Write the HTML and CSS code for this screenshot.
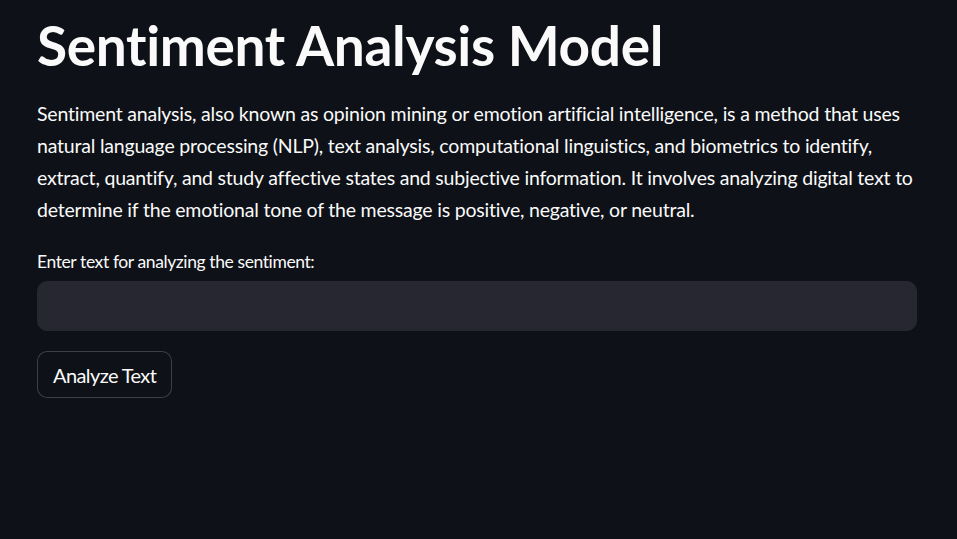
FILE: index.html
```html
<!DOCTYPE html>
<html lang="en">
<head>
<meta charset="utf-8">
<title>Sentiment Analysis Model</title>
<link rel="stylesheet" href="styles.css">
</head>
<body>
<main class="main">
  <h1 class="title">Sentiment Analysis Model</h1>
  <p class="intro">Sentiment analysis, also known as opinion mining or emotion artificial intelligence, is a method that uses natural language processing (NLP), text analysis, computational linguistics, and biometrics to identify, extract, quantify, and study affective states and subjective information. It involves analyzing digital text to determine if the emotional tone of the message is positive, negative, or neutral.</p>
  <div class="field">
    <label class="label" for="txt">Enter text for analyzing the sentiment:</label>
    <input class="input" id="txt" type="text">
  </div>
  <button class="btn" type="button">Analyze Text</button>
</main>
</body>
</html>
```

FILE: styles.css
```css
html, body {
  margin: 0;
  padding: 0;
  background: #0e1117;
  height: 100%;
}
body {
  font-family: Lato, "Noto Sans", sans-serif;
  color: #fafafa;
}
.main {
  padding: 12px 36px 0 37px;
  display: flex;
  flex-direction: column;
  align-items: flex-start;
}
.title {
  margin: 0;
  font-size: 55px;
  line-height: 66px;
  font-weight: 700;
  letter-spacing: -0.35px;
}
.intro {
  margin: 20px 0 0 0;
  font-size: 19.5px;
  line-height: 32px;
  letter-spacing: -0.2px;
  max-width: 884px;
}
.field {
  margin-top: 24px;
  width: 880px;
  display: flex;
  flex-direction: column;
}
.label {
  font-size: 17.5px;
  line-height: 24px;
  letter-spacing: -0.4px;
  margin-bottom: 7px;
}
.input {
  box-sizing: border-box;
  height: 50px;
  width: 100%;
  border: 1px solid #262730;
  border-radius: 10px;
  background: #262730;
  outline: none;
  color: #fafafa;
  font: inherit;
  padding: 0 16px;
}
.btn {
  margin-top: 20px;
  box-sizing: border-box;
  height: 47px;
  padding: 0 15px;
  background: #0e1117;
  border: 1px solid rgba(250, 250, 250, 0.2);
  border-radius: 10px;
  color: #fafafa;
  font-family: inherit;
  font-size: 20px;
  letter-spacing: -0.6px;
}
```
